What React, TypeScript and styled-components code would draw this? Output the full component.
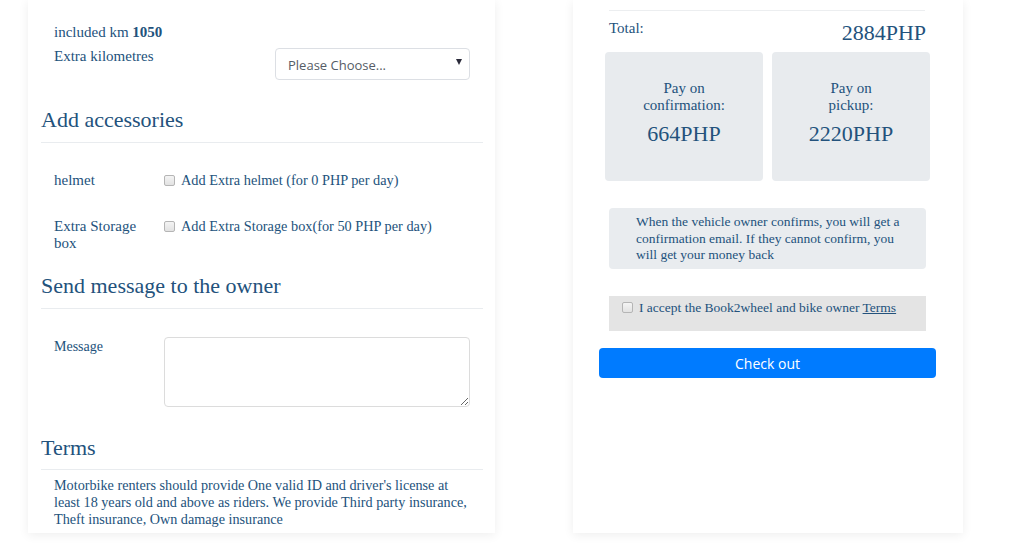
import React from "react";
import styled, { createGlobalStyle } from "styled-components";

const Global = createGlobalStyle`
  html, body { margin: 0; padding: 0; background: #fff; }
  body { font-family: "Liberation Serif", "Times New Roman", serif; color: #23527c; }
  * { box-sizing: border-box; }
`;

const Page = styled.div`
  display: flex;
  align-items: flex-start;
  gap: 78px;
  padding-left: 28px;
  width: 1024px;
  height: 553px;
  overflow: hidden;
`;

const Card = styled.div<{ $w: number; $pad: string }>`
  width: ${(p) => p.$w}px;
  height: 533px;
  background: #fff;
  box-shadow: 0 2px 10px rgba(0, 0, 0, 0.07);
  padding: ${(p) => p.$pad};
  display: flex;
  flex-direction: column;
`;

const KmInfo = styled.div`
  margin-top: 20px;
  padding-left: 13px;
  font-size: 15px;
  line-height: 24px;
  b { font-weight: bold; }
`;

const KmRow = styled.div`
  display: flex;
  padding-left: 13px;
  font-size: 15px;
  line-height: 24px;
`;

const KmLabel = styled.div`
  width: 221px;
`;

const SelectWrap = styled.div`
  position: relative;
  margin-top: 4px;
  width: 195px;
  height: 32px;
`;

const Select = styled.select`
  appearance: none;
  width: 100%;
  height: 100%;
  border: 1px solid #dcdfe4;
  border-radius: 4px;
  background: #fff;
  padding: 1px 12px 0;
  font-family: "Open Sans", sans-serif;
  font-size: 13px;
  color: #555c66;
  outline: none;
`;

const Caret = styled.span`
  position: absolute;
  right: 8px;
  top: 11px;
  width: 0;
  height: 0;
  border-left: 3.5px solid transparent;
  border-right: 3.5px solid transparent;
  border-top: 6px solid #2a2a3a;
  pointer-events: none;
`;

const Heading = styled.h3<{ $mt: number }>`
  margin: ${(p) => p.$mt}px 0 0;
  font-weight: normal;
  font-size: 22px;
  line-height: 26px;
  color: #23527c;
`;

const Rule = styled.div<{ $mt?: number }>`
  margin-top: ${(p) => p.$mt ?? 9}px;
  height: 1px;
  background: #e9ecef;
`;

const OptRow = styled.div<{ $mt: number }>`
  display: flex;
  margin-top: ${(p) => p.$mt}px;
  padding-left: 13px;
  line-height: 17px;
`;

const OptLabel = styled.div<{ $size?: number; $pt?: number }>`
  width: 110px;
  font-size: ${(p) => p.$size ?? 15}px;
  padding: ${(p) => p.$pt ?? 0}px 8px 0 0;
`;

const Check = styled.input.attrs({ type: "checkbox" })`
  appearance: none;
  width: 11px;
  height: 11px;
  margin: 3px 6px 0 0;
  border: 1px solid #b5b5b5;
  border-radius: 2px;
  background: linear-gradient(#f4f4f4, #e2e2e2);
  flex: none;
`;

const CheckText = styled.span`
  font-size: 14.3px;
`;

const TextArea = styled.textarea`
  width: 306px;
  height: 70px;
  border: 1px solid #dcdcdc;
  border-radius: 4px;
  resize: vertical;
  outline: none;
`;

const TermsText = styled.p`
  margin: 7px 0 0;
  padding: 0 8px 0 13px;
  font-size: 14.2px;
  line-height: 17px;
`;

const TopRule = styled.div`
  margin: 10px 1px 0 0;
  height: 1px;
  background: #eceef0;
`;

const TotalRow = styled.div`
  display: flex;
  justify-content: space-between;
  margin-top: 8px;
`;

const TotalLabel = styled.span`
  font-size: 15px;
  line-height: 18px;
`;

const TotalAmount = styled.span`
  font-size: 22px;
  line-height: 26px;
  margin-top: 1px;
`;

const PayGrid = styled.div`
  display: grid;
  grid-template-columns: 158px 158px;
  gap: 9px;
  margin: 6px -4px 0;
`;

const PayBox = styled.div`
  height: 129px;
  background: #e8ebee;
  border-radius: 4px;
  text-align: center;
  padding-top: 28px;
`;

const PayLabel = styled.div`
  font-size: 15px;
  line-height: 17px;
`;

const PayAmount = styled.div`
  margin-top: 7px;
  font-size: 22px;
  line-height: 26px;
`;

const InfoBox = styled.div`
  margin-top: 27px;
  height: 61px;
  background: #e9ecef;
  border-radius: 4px;
  padding: 6px 24px 0 27px;
  font-size: 13.5px;
  line-height: 16.5px;
`;

const AcceptBox = styled.label`
  margin-top: 27px;
  height: 35px;
  background: #e4e4e4;
  display: flex;
  align-items: flex-start;
  padding: 3px 0 0 13px;
  font-size: 13.5px;
  line-height: 17px;
  a { color: #23527c; text-decoration: underline; }
`;

const CheckoutButton = styled.button`
  margin: 17px -10px 0;
  height: 30px;
  border: none;
  border-radius: 4px;
  background: #007bff;
  color: #fff;
  font-family: "Open Sans", sans-serif;
  font-size: 14px;
`;

export default function App() {
  return (
    <>
      <Global />
      <Page>
        <Card $w={467} $pad="0 12px 0 13px">
          <KmInfo>
            included km <b>1050</b>
          </KmInfo>
          <KmRow>
            <KmLabel>Extra kilometres</KmLabel>
            <SelectWrap>
              <Select defaultValue="">
                <option value="">Please Choose...</option>
              </Select>
              <Caret />
            </SelectWrap>
          </KmRow>

          <Heading $mt={27}>Add accessories</Heading>
          <Rule />
          <OptRow $mt={29}>
            <OptLabel>helmet</OptLabel>
            <Check />
            <CheckText>Add Extra helmet (for 0 PHP per day)</CheckText>
          </OptRow>
          <OptRow $mt={29}>
            <OptLabel>Extra Storage box</OptLabel>
            <Check />
            <CheckText>Add Extra Storage box(for 50 PHP per day)</CheckText>
          </OptRow>

          <Heading $mt={21}>Send message to the owner</Heading>
          <Rule />
          <OptRow $mt={28}>
            <OptLabel $size={14} $pt={1}>
              Message
            </OptLabel>
            <TextArea />
          </OptRow>

          <Heading $mt={28}>Terms</Heading>
          <Rule $mt={8} />
          <TermsText>
            Motorbike renters should provide One valid ID and driver's license at least 18 years old and above as riders. We
            provide Third party insurance, Theft insurance, Own damage insurance
          </TermsText>
        </Card>

        <Card $w={390} $pad="0 37px 0 36px">
          <TopRule />
          <TotalRow>
            <TotalLabel>Total:</TotalLabel>
            <TotalAmount>2884PHP</TotalAmount>
          </TotalRow>
          <PayGrid>
            <PayBox>
              <PayLabel>
                Pay on
                <br />
                confirmation:
              </PayLabel>
              <PayAmount>664PHP</PayAmount>
            </PayBox>
            <PayBox>
              <PayLabel>
                Pay on
                <br />
                pickup:
              </PayLabel>
              <PayAmount>2220PHP</PayAmount>
            </PayBox>
          </PayGrid>
          <InfoBox>
            When the vehicle owner confirms, you will get a confirmation email. If they cannot confirm, you will get your
            money back
          </InfoBox>
          <AcceptBox>
            <Check />
            <span>
              I accept the Book2wheel and bike owner <a href="#">Terms</a>
            </span>
          </AcceptBox>
          <CheckoutButton>Check out</CheckoutButton>
        </Card>
      </Page>
    </>
  );
}
